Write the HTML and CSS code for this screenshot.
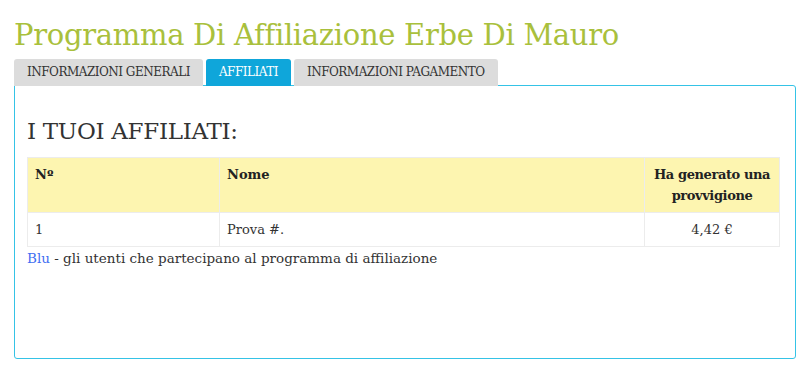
FILE: index.html
```html
<!DOCTYPE html>
<html lang="it">
<head>
<meta charset="utf-8">
<link rel="stylesheet" href="styles.css">
</head>
<body>
<div class="page">
  <h1 class="title">Programma Di Affiliazione Erbe Di Mauro</h1>
  <nav class="tabs">
    <div class="tab">INFORMAZIONI GENERALI</div>
    <div class="tab active">AFFILIATI</div>
    <div class="tab">INFORMAZIONI PAGAMENTO</div>
  </nav>
  <section class="panel">
    <h2 class="heading">I TUOI AFFILIATI:</h2>
    <table class="grid">
      <colgroup>
        <col class="c1"><col class="c2"><col class="c3">
      </colgroup>
      <thead>
        <tr>
          <th>Nº</th>
          <th>Nome</th>
          <th class="center">Ha generato una<br>provvigione</th>
        </tr>
      </thead>
      <tbody>
        <tr>
          <td>1</td>
          <td>Prova #.</td>
          <td class="center">4,42 €</td>
        </tr>
      </tbody>
    </table>
    <p class="legend"><span class="blue">Blu</span> - gli utenti che partecipano al programma di affiliazione</p>
  </section>
</div>
</body>
</html>
```
FILE: styles.css
```css
html, body {
  margin: 0;
  padding: 0;
  background: #fff;
}
.page {
  padding: 0 4px 0 14px;
  font-family: "DejaVu Serif", "Liberation Serif", serif;
  color: #333;
}
.title {
  margin: 0;
  padding-top: 17px;
  height: 59px;
  box-sizing: border-box;
  font-size: 29px;
  font-weight: 300;
  line-height: 36px;
  color: #a9c03c;
  letter-spacing: -0.3px;
  white-space: nowrap;
}
.tabs {
  display: flex;
  gap: 3px;
  position: relative;
  z-index: 1;
  margin-bottom: -1px;
}
.tab {
  height: 27px;
  line-height: 27px;
  padding: 0 13px;
  background: #dcdcdc;
  border-radius: 3px 3px 0 0;
  font-size: 12px;
  color: #333;
  letter-spacing: -0.5px;
  white-space: nowrap;
}
.tab.active {
  background: #0fa6da;
  color: #fff;
}
.panel {
  border: 1px solid #35c3e6;
  border-radius: 0 3px 3px 3px;
  height: 274px;
  box-sizing: border-box;
  padding: 30px 15px 0 12px;
}
.heading {
  margin: 0;
  font-size: 23px;
  font-weight: 400;
  line-height: 30px;
  color: #333;
  height: 41px;
  letter-spacing: -0.3px;
}
.grid {
  width: 100%;
  border-collapse: collapse;
  table-layout: fixed;
  font-size: 13px;
}
.c1 { width: 192px; }
.c3 { width: 135px; }
.grid th, .grid td {
  border: 1px solid #ececec;
  text-align: left;
  vertical-align: top;
  padding: 6px 7px;
  line-height: 21px;
}
.grid th {
  background: #fdf5b0;
  font-weight: 700;
  height: 42px;
  color: #222;
  white-space: nowrap;
}
.grid th.center {
  padding: 6px 2px;
  letter-spacing: -0.4px;
}
.grid td {
  height: 21px;
}
.grid .center { text-align: center; }
.legend {
  margin: 0;
  font-size: 13.5px;
  line-height: 22px;
}
.blue { color: #3f6ef2; }
```
